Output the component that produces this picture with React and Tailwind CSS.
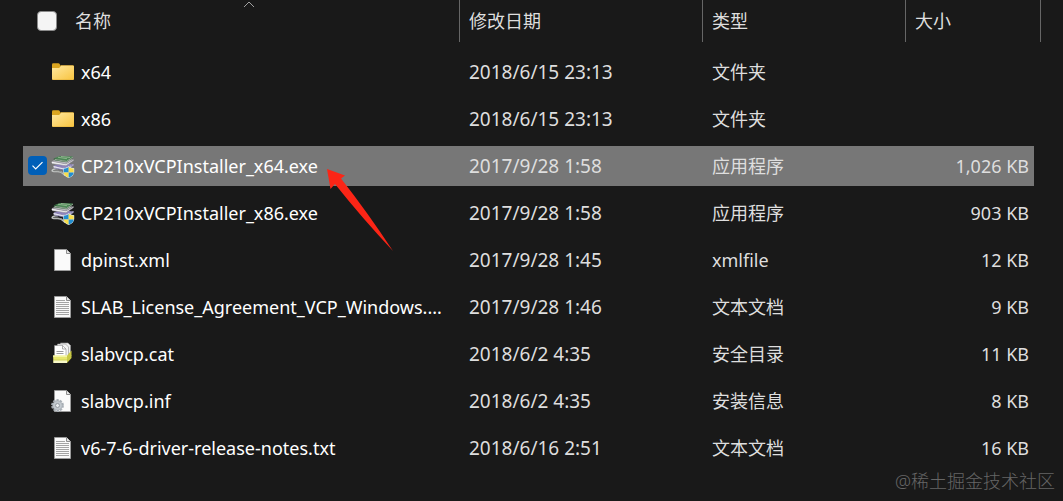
const FolderIcon = () => (
  <svg className="size-6 shrink-0" viewBox="0 0 24 24" aria-hidden="true">
    <defs>
      <linearGradient id="folder" x1="0" y1="0" x2="1" y2="1">
        <stop offset="0" stopColor="#ffe8a0" />
        <stop offset="1" stopColor="#f8c440" />
      </linearGradient>
    </defs>
    <path d="M1 4.500q0-1.300 1.300-1.300h5.200q1 0 2 2.300v3.500h-8.500z" fill="#dba520" />
    <path d="M1 8h7l2-2.800h11.800q1.200 0 1.200 1.200v12.600q0 1-1 1h-20q-1 0-1-1z" fill="#e3b038" />
    <path d="M1 8h7.200l2-2.200h11.800q1 0 1 1v11.700q0 1-1 1h-20q-1 0-1-1z" fill="url(#folder)" />
  </svg>
);

const InstallerIcon = () => (
  <svg className="size-6 shrink-0" viewBox="0 0 24 24" aria-hidden="true">
    <path d="M7 14.500C-1 15.500 0 18 5 17.500S11 18.500 14 21.500" fill="none" stroke="#c5c8c6" strokeWidth="1.500" />
    <path d="M6.500 15.500C1 16.500 1.500 17 5 16.800S11 18 13 20" fill="none" stroke="#777b78" strokeWidth=".7" />
    <path d="M3 11.500l7-2.500 12 1.500-6.500 5z" fill="#8d83bd" />
    <path d="M3 11.500q-1.500 1.500.5 2.500l11.500 2.500 7.500-5v-1.500l-7.500 4z" fill="#e5e3f3" />
    <path d="M3 11.500l12 3 7.500-4M3.500 14l11.500 2.500 7.500-5" fill="none" stroke="#6d6598" strokeWidth=".7" />
    <path d="M1 7.200l6-2.700 15 1-7 4.500z" fill="#b4b4b8" />
    <path d="M1 7.200q-1 1.500.5 2.500l13.500 2 7.500-5.200v-1l-7.500 4.500z" fill="#f3f3f5" />
    <path d="M1 7.300l14 2.700 7.500-4.500M1.500 9.700l13.500 2 7.500-5.200" fill="none" stroke="#8a8791" strokeWidth=".6" />
    <path d="M3 4.200l6-2.200 13 .5-6.500 4.500z" fill="#4a8854" />
    <path d="M3 4.200q-1 1 .5 2l12 2 6.500-4.500v-1.200l-6.500 4.500z" fill="#2b5936" />
    <path d="M3.500 5.300l12 2.200 6.500-4.500" fill="none" stroke="#c4cfbf" strokeWidth=".7" />
    <path d="M7 3.300l9 1.400M10 2.500l9 1" stroke="#a9c3a3" strokeWidth=".7" />
    <path d="M17.700 12.300q2.800 2 5.500 2v3.900q-.5 4-5.500 5.800-5-1.800-5.500-5.800v-3.900q2.700 0 5.500-2z" fill="#e3edf0" />
    <path d="M17.700 12.900q-2.300 1.700-5 1.900v3.600h5z" fill="#228ed0" />
    <path d="M17.700 12.900q2.300 1.700 5 1.900v3.600h-5z" fill="#f7dd4b" />
    <path d="M17.700 18.400h-5q.5 3.500 5 5.100z" fill="#f7dd4b" />
    <path d="M17.700 18.400h5q-.5 3.500-5 5.100z" fill="#228ed0" />
  </svg>
);

const Page = ({ lines }) => (
  <>
    <path d="M3.500 1.500h12l4 4v17h-16z" fill="#fafafa" stroke="#9b9b9b" />
    <path d="M15.500 1.500v4h4" fill="#e4e4e4" stroke="#8c8c8c" />
    {lines && <path d="M5 5.500h9M5 7.500h13M5 9.500h13M5 11.500h13M5 13.500h13M5 15.500h13M5 17.500h13M5 19.500h13" stroke="#a4a4a4" />}
  </>
);

const BlankIcon = () => (
  <svg className="size-6 shrink-0" viewBox="0 0 24 24" aria-hidden="true"><Page /></svg>
);

const TextIcon = () => (
  <svg className="size-6 shrink-0" viewBox="0 0 24 24" aria-hidden="true"><Page lines /></svg>
);

const CatalogIcon = () => (
  <svg className="size-6 shrink-0" viewBox="0 0 24 24" aria-hidden="true">
    <path d="M9.500 1h7.500l2.500 2.500v11h-10z" fill="#eee" stroke="#9a9a9a" strokeWidth=".6" />
    <path d="M6.500 2h8l3 3v11h-11z" fill="#f4f4f4" stroke="#929292" strokeWidth=".6" />
    <path d="M3.500 3.500h8l3.500 3.500v10H3.500z" fill="#fff" stroke="#8d8d8d" strokeWidth=".6" />
    <path d="M11.500 3.500v3.500h3.500" fill="none" stroke="#8d8d8d" strokeWidth=".7" />
    <path d="M5.500 9.500h7M5.500 11.500h7" stroke="#909090" strokeWidth=".9" />
    <path d="M16 13.500l4.500-5v7.500l-4.500 5z" fill="#c9c944" />
    <path d="M2 13.500h14v7.500H2.500z" fill="#e7e76d" />
    <path d="M2 13.500h14v1.200H2z" fill="#fafaba" />
    <path d="M2.500 18.300H16v2.700H2.500z" fill="#f7f7c8" />
    <path d="M2.500 18h13.500l4.500-4.500" fill="none" stroke="#c1c24b" strokeWidth=".6" />
  </svg>
);

const SetupIcon = () => (
  <svg className="size-6 shrink-0" viewBox="0 0 24 24" aria-hidden="true">
    <Page />
    <circle cx="6.500" cy="16.500" r="5.300" fill="none" stroke="#aab1b8" strokeWidth="2.200" strokeDasharray="2.200 1.130" />
    <circle cx="6.500" cy="16.500" r="3.500" fill="none" stroke="#c1c8ce" strokeWidth="3" />
    <circle cx="6.500" cy="16.500" r="4.800" fill="none" stroke="#858c93" strokeWidth=".4" />
    <circle cx="6.500" cy="16.500" r="2" fill="#e9edf0" stroke="#858c93" strokeWidth=".8" />
  </svg>
);

const files = [
  { name: "x64", date: "2018/6/15 23:13", type: "文件夹", size: "", Icon: FolderIcon },
  { name: "x86", date: "2018/6/15 23:13", type: "文件夹", size: "", Icon: FolderIcon },
  { name: "CP210xVCPInstaller_x64.exe", date: "2017/9/28 1:58", type: "应用程序", size: "1,026 KB", Icon: InstallerIcon, selected: true },
  { name: "CP210xVCPInstaller_x86.exe", date: "2017/9/28 1:58", type: "应用程序", size: "903 KB", Icon: InstallerIcon },
  { name: "dpinst.xml", date: "2017/9/28 1:45", type: "xmlfile", size: "12 KB", Icon: BlankIcon },
  { name: "SLAB_License_Agreement_VCP_Windows....", date: "2017/9/28 1:46", type: "文本文档", size: "9 KB", Icon: TextIcon },
  { name: "slabvcp.cat", date: "2018/6/2 4:35", type: "安全目录", size: "11 KB", Icon: CatalogIcon },
  { name: "slabvcp.inf", date: "2018/6/2 4:35", type: "安装信息", size: "8 KB", Icon: SetupIcon },
  { name: "v6-7-6-driver-release-notes.txt", date: "2018/6/16 2:51", type: "文本文档", size: "16 KB", Icon: TextIcon },
];

const Arrow = () => (
  <svg className="pointer-events-none absolute top-3.5 left-full ml-2 h-[84px] w-[68px]" viewBox="0 0 68 84" aria-hidden="true">
    <path d="M1 1L19 7.500 15 10.500Q42 45 67 83 36 50 9 16L4.500 21z" fill="#fb2516" />
  </svg>
);

function FileRow({ name, date, type, size, Icon, selected }) {
  const cell = selected ? "flex h-10 items-center bg-[#777777]" : "flex h-10 items-center";
  return (
    <tr className="h-[47px] text-[#dedede]">
      <td className="p-0">
        <div className={`${cell} ${selected ? "pl-[5px]" : "pl-7"}`}>
          {selected && (
            <span className="mr-1 grid size-[19px] shrink-0">
              <input type="checkbox" defaultChecked aria-label={`选择 ${name}`} className="col-start-1 row-start-1 size-[19px] appearance-none rounded bg-[#005fb8]" />
              <svg className="pointer-events-none col-start-1 row-start-1 size-[19px]" viewBox="0 0 19 19" aria-hidden="true">
                <path d="M4.500 9.700l3.200 3.200 6.800-6.800" fill="none" stroke="#fff" strokeWidth="1.200" />
              </svg>
            </span>
          )}
          <Icon />
          <span className="relative ml-1.5 whitespace-nowrap text-white">
            {name}
            {selected && <Arrow />}
          </span>
        </div>
      </td>
      <td className="p-0"><div className={`${cell} pl-[9px] text-[19px]`}>{date}</div></td>
      <td className="p-0"><div className={`${cell} pl-[9px]`}>{type}</div></td>
      <td className="p-0 pr-[7px]"><div className={`${cell} justify-end pr-[5px]`}>{size}</div></td>
    </tr>
  );
}

export default function App() {
  const head = "flex h-[42px] items-center border-r border-[#666666] pl-[9px]";
  return (
    <main className="min-h-screen bg-[#191919] pr-[22px] pl-[23px] font-['Noto_Sans','Noto_Sans_CJK_SC',sans-serif] text-lg leading-6">
      <table className="w-full table-fixed border-collapse">
        <colgroup>
          <col />
          <col className="w-[243px]" />
          <col className="w-[203px]" />
          <col className="w-[135px]" />
        </colgroup>
        <thead>
          <tr className="h-12 text-left align-top text-[#dedede]">
            <th className="p-0 font-normal">
              <div className="relative flex h-[42px] items-center border-r border-[#666666] pl-3.5">
                <input id="all" type="checkbox" className="size-5 appearance-none rounded border border-[#8a8a8a] bg-[#f5f5f5]" />
                <label htmlFor="all" className="ml-[18px]">名称</label>
                <svg className="absolute top-0 left-1/2 ml-0.5 h-2 w-3" viewBox="0 0 12 8" aria-hidden="true">
                  <path d="M1 7l5-5 5 5" fill="none" stroke="#a0a0a0" />
                </svg>
              </div>
            </th>
            <th className="p-0 font-normal"><div className={head}>修改日期</div></th>
            <th className="p-0 font-normal"><div className={head}>类型</div></th>
            <th className="p-0 font-normal"><div className={head}>大小</div></th>
          </tr>
        </thead>
        <tbody>
          {files.map((file) => <FileRow key={file.name} {...file} />)}
        </tbody>
      </table>
      <footer className="-mt-0.5 -mr-3.5 flex justify-end font-light text-[#666666]">@稀土掘金技术社区</footer>
    </main>
  );
}
